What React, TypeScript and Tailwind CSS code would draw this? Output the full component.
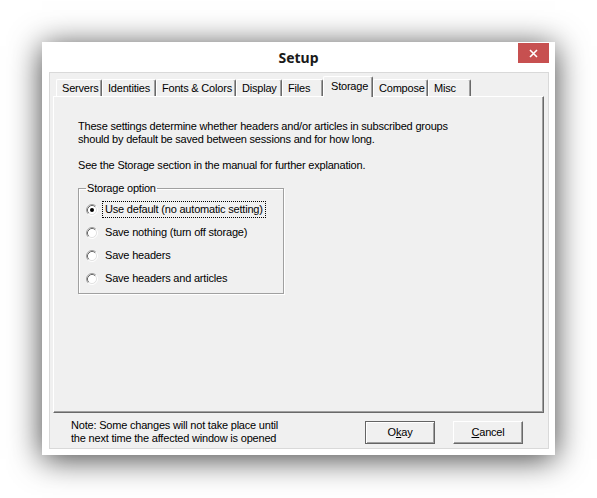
import React, { useState } from 'react';

const tabs = [
    { label: 'Servers', w: 46 },
    { label: 'Identities', w: 54 },
    { label: 'Fonts & Colors', w: 80 },
    { label: 'Display', w: 46 },
    { label: 'Files', w: 41 },
    { label: 'Storage', w: 50 },
    { label: 'Compose', w: 55 },
    { label: 'Misc', w: 43 },
];

const options = [
    'Use default (no automatic setting)',
    'Save nothing (turn off storage)',
    'Save headers',
    'Save headers and articles',
];

const Radio: React.FC<{ checked: boolean }> = ({ checked }) => (
    <svg width="12" height="12" viewBox="0 0 12 12" className="shrink-0">
        <circle cx="6" cy="6" r="4.5" fill="#fff" />
        <path d="M2.11 9.89 A5.5 5.5 0 0 1 9.89 2.11" fill="none" stroke="#a0a0a0" strokeWidth="1" />
        <path d="M9.89 2.11 A5.5 5.5 0 0 1 2.11 9.89" fill="none" stroke="#ffffff" strokeWidth="1" />
        <path d="M2.82 9.18 A4.5 4.5 0 0 1 9.18 2.82" fill="none" stroke="#696969" strokeWidth="1" />
        <path d="M9.18 2.82 A4.5 4.5 0 0 1 2.82 9.18" fill="none" stroke="#e3e3e3" strokeWidth="1" />
        {checked && <circle cx="6" cy="6" r="2" fill="#000" />}
    </svg>
);

export default function App() {
    const [active, setActive] = useState('Storage');
    const [choice, setChoice] = useState(0);

    return (
        <div className="w-[597px] h-[498px] bg-white pt-[42px] pl-[42px] font-['Liberation_Sans',Arial,sans-serif] text-[11px] leading-[13px] tracking-[-0.2px] text-black">
            <div className="w-[513px] h-[413px] bg-white flex flex-col shadow-[0_4px_30px_rgba(0,0,0,0.75)]">
                {/* title bar */}
                <div className="h-[30px] grid grid-cols-[1fr_auto_1fr]">
                    <div />
                    <div className="self-center font-['Noto_Sans',sans-serif] font-bold text-[14px] leading-[20px] tracking-normal text-[#1a1a1a] pt-[1px]">Setup</div>
                    <div className="flex justify-end items-start pr-[6px] pt-[1px]">
                        <div className="w-[31px] h-[20px] bg-[#c75050] flex items-center justify-center">
                            <svg width="9" height="9" viewBox="0 0 9 9">
                                <path d="M1 1 L8 8 M8 1 L1 8" stroke="#fff" strokeWidth="1.6" />
                            </svg>
                        </div>
                    </div>
                </div>

                {/* client area */}
                <div className="ml-[7px] w-[500px] h-[377px] border border-[#d9d9d9] bg-[#f0f0f0] flex flex-col pt-[3px] pl-[3px] pr-[4px]">
                    <div className="relative z-10 h-[21px] flex items-end pl-[3px]">
                        {tabs.map(t => {
                            const on = t.label === active;
                            return (
                                <div
                                    key={t.label}
                                    onClick={() => setActive(t.label)}
                                    style={{ width: t.w }}
                                    className={
                                        on
                                            ? 'h-[21px] bg-[#f0f0f0] border-t border-l border-white border-r border-r-[#696969] shadow-[inset_-1px_0_0_#a0a0a0] pl-[7px] pt-[3px] rounded-t-[2px]'
                                            : 'h-[17px] mb-[1px] bg-[#f0f0f0] border-t border-l border-white border-r border-r-[#696969] shadow-[inset_-1px_0_0_#a0a0a0] pl-[5px] pt-[2px] rounded-t-[2px]'
                                    }
                                >
                                    {t.label}
                                </div>
                            );
                        })}
                    </div>

                    <div className="-mt-px h-[317px] border-t border-l border-white border-r border-b border-r-[#696969] border-b-[#696969] shadow-[inset_-1px_-1px_0_#a0a0a0] pl-[24px] pt-[23px]">
                        <p>
                            These settings determine whether headers and/or articles in subscribed groups
                            <br />
                            should by default be saved between sessions and for how long.
                        </p>
                        <p className="mt-[13px]">See the Storage section in the manual for further explanation.</p>

                        <fieldset className="mt-[10px] w-[206px] border border-[#a0a0a0] shadow-[inset_1px_1px_0_#fff,1px_1px_0_#fff] pl-[7px] pt-[3px] pb-[3px]">
                            <legend className="px-[1px] leading-[13px]">Storage option</legend>
                            {options.map((o, i) => (
                                <div key={o} className="h-[23px] flex items-center cursor-default" onClick={() => setChoice(i)}>
                                    <Radio checked={choice === i} />
                                    <span
                                        className={
                                            'ml-[4px] px-[2px] py-[1px] border ' +
                                            (i === 0 ? 'border-dotted border-black' : 'border-transparent')
                                        }
                                    >
                                        {o}
                                    </span>
                                </div>
                            ))}
                        </fieldset>
                    </div>

                    <div className="flex-1 flex items-start pl-[18px] pr-[21px]">
                        <p className="pt-[6px] flex-1">
                            Note: Some changes will not take place until
                            <br />
                            the next time the affected window is opened
                        </p>
                        <div className="flex gap-[18px] mt-[8px]">
                            <button className="w-[70px] h-[23px] border border-[#646464] bg-[#f0f0f0] shadow-[inset_1px_1px_0_#fff,inset_-1px_-1px_0_#a0a0a0] flex items-center justify-center">
                                <span>O<span className="underline">k</span>ay</span>
                            </button>
                            <button className="w-[70px] h-[23px] border-t border-l border-white border-r border-b border-r-[#696969] border-b-[#696969] bg-[#f0f0f0] shadow-[inset_-1px_-1px_0_#a0a0a0] flex items-center justify-center">
                                <span><span className="underline">C</span>ancel</span>
                            </button>
                        </div>
                    </div>
                </div>
            </div>
        </div>
    );
}
